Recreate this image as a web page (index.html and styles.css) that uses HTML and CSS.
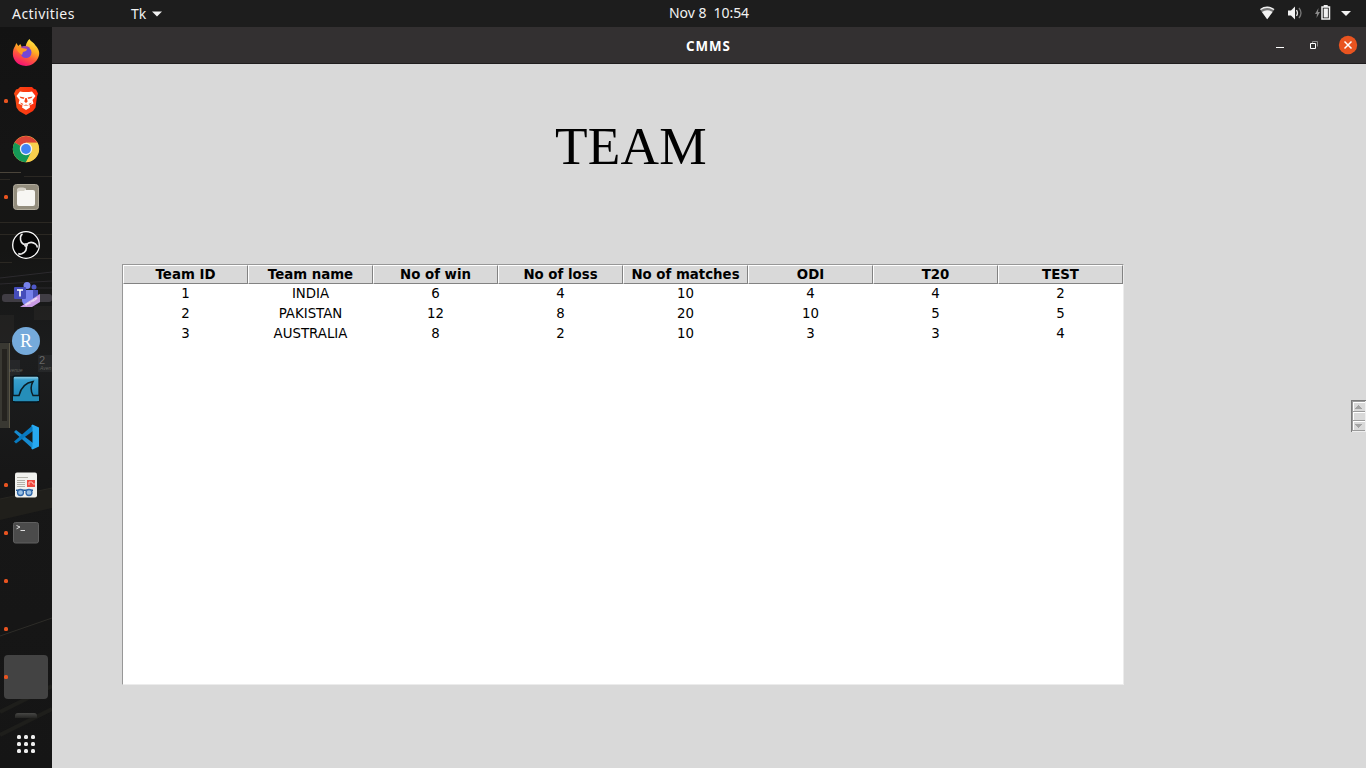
FILE: index.html
```html
<!DOCTYPE html>
<html lang="en">
<head>
<meta charset="utf-8">
<title>CMMS</title>
<link rel="stylesheet" href="styles.css">
</head>
<body>
<header class="topbar">
  <span class="activities">Activities</span>
  <span class="app-menu">Tk</span>
  <svg class="app-arrow" width="10" height="6"><path d="M0 .5h10L5 5.5z" fill="#f2f2f2"/></svg>
  <span class="clock">Nov 8&nbsp; 10:54</span>
  <svg class="tray" width="96" height="27" viewBox="0 0 96 27">
    <path d="M0 9.5Q7 4 14.500 9.500L7.200 19.300z" fill="#777"/>
    <path d="M.5 9.500Q7 5 14 9.500" fill="none" stroke="#eee" stroke-width="1.400"/>
    <path d="M2 12Q7 8.500 12.500 12L7.200 19.300z" fill="#f2f2f2"/>
    <path d="M28 10.500h3l4-4v13l-4-4h-3z" fill="#f2f2f2"/>
    <path d="M36.500 10q2 3 0 6" fill="none" stroke="#ddd" stroke-width="1.300"/>
    <path d="M39 8q4 5 0 10" fill="none" stroke="#777" stroke-width="1.300"/>
    <path d="M58.500 8l-3.500 6h2l-.5 4 3.500-6h-2z" fill="#888"/>
    <path d="M62 7h7.500v12H62z" fill="none" stroke="#f2f2f2" stroke-width="1.500"/>
    <path d="M63.700 5h4v2h-4zM63.700 8.500h4.200v9h-4.200z" fill="#f2f2f2"/>
    <path d="M81 11h10l-5 5z" fill="#f2f2f2"/>
  </svg>
</header>
<div class="desktop">
  <nav class="dock">
    <svg class="wallpaper" width="52" height="741" viewBox="0 27 52 741">
      <defs><linearGradient id="wall" x1="0" y1="0" x2="0" y2="1"><stop offset="0" stop-color="#131313"/><stop offset=".17" stop-color="#151515"/><stop offset=".3" stop-color="#151514"/><stop offset=".45" stop-color="#1c1d1e"/><stop offset=".6" stop-color="#171717"/><stop offset="1" stop-color="#151515"/></linearGradient></defs>
      <path d="M0 27h52v741H0z" fill="url(#wall)"/>
      <g stroke="#3a362d" fill="none" stroke-width="1"><path d="M0 172.500h21" stroke="#4a443a"/><path d="M0 179.500h10M24 176.500h28M0 222.500h52M0 234.500h52M0 262.500h12M28 258.500h24" opacity=".6"/><path d="M0 278l52-6M0 284l52-3M30 288h22" stroke="#2c2a2e"/></g>
      <rect x="2" y="294" width="50" height="8" rx="3" fill="#403d44"/>
      <path d="M0 315h14v27H0zM34 306v14h18v-14" fill="#34332f" opacity=".3"/>
      <path d="M0 343h10v85H0z" fill="#393832"/><path d="M2 349h5v72H2z" fill="#25231f"/><path d="M9.500 343v85" stroke="#68634f" opacity=".7"/>
      <path d="M38 355h14v17H38zM10 360h10v16H10z" fill="#303233" opacity=".5"/>
      <text x="39" y="364" class="sign">2</text><text x="40" y="370" class="sign-small">Aven</text><text x="9" y="372" class="sign-small">venue</text>
      <path d="M0 499l52-11v20L0 520z" fill="#201f1b"/><path d="M0 499l52-11" stroke="#282722"/>
      <path d="M0 636l52-18" stroke="#2d2c28"/><path d="M0 735l52-26M0 712l52-26" stroke="#1e1e1b" stroke-width="4"/>
    </svg>
    <div class="launcher">
      <svg viewBox="0 0 48 48"><defs><linearGradient id="fox" x1=".8" y1="0" x2=".35" y2="1"><stop offset="0" stop-color="#fff04b"/><stop offset=".4" stop-color="#ffad22"/><stop offset=".67" stop-color="#ff573d"/><stop offset="1" stop-color="#f50e76"/></linearGradient></defs>
      <path d="M27.500 10c1 2.500 4.500 3.500 6 6.500 4 4 5 9 2 13.500C32 36 26 38 20.500 36.500 14 35 10 29.500 11 22.500c.4-3 1.500-4.500 2.300-6l1-2.500 2 3 2-2 1.500 3 4-1c.5-3 2-5.500 3.700-7z" fill="url(#fox)"/><circle cx="24" cy="23.500" r="5.500" fill="#7546d8"/><path d="M19 18c4-2 7-1 9 1l-3 1c-2 .3-2 2-5 2z" fill="#9a42b6"/><path d="M14 17l6 2 5 1c0 2-2 2-4 3l-1 3c-3-2-6-5-6-9z" fill="#ff9823"/></svg>
    </div>
    <div class="launcher running"><svg viewBox="0 0 48 48"><defs><linearGradient id="lion"><stop stop-color="#f64b16"/><stop offset="1" stop-color="#ff2b0d"/></linearGradient></defs><path d="M18 10h12l2 2 2 .5 2 4-1 3-1.500 11-2.500 3.500-7 4-7-4-2.500-3.500L13 19.500l-1-3 2-4 2-.5z" fill="url(#lion)"/><path d="M18 14.500l3 .5h6l3-.5 3.500 4.500-3 4 1 3.500-4 2 .5 2-4 2.500-4-2.500.5-2-4-2 1-3.500-3-4z" fill="#fff"/><path d="M17.500 19.500l5 1-1 1.500-3-1zm13 0l-5 1 1 1.500 3-1zM23.300 21h1.400l1 3.500-1.700 1.500-1.700-1.500zM18 25.500l3.500 1.500-1.500 1zm12 0L26.500 27l1.500 1zM24 27.500l3 1.500-3-.5-3 .5z" fill="#f64518"/></svg></div>
    <div class="launcher"><svg viewBox="0 0 48 48"><circle cx="24" cy="24" r="13.200" fill="#f7c944"/><path d="M24 24L12.600 17.400A13.200 13.200 0 0 1 35.400 17.800H24z" fill="#db4437"/><path d="M12.600 17.400A13.200 13.200 0 0 0 24 37.200l5.300-10.200-5.300-3z" fill="#159957"/><path d="M24 17.800h11.400c4 8-1 19-11.400 19.400L29.500 27z" fill="#f8cf4d"/><circle cx="24" cy="24" r="6.200" fill="#f2f2f2"/><circle cx="24" cy="24" r="4.900" fill="#4285f4"/></svg></div>
    <div class="launcher running"><svg viewBox="0 0 48 48"><rect x="11.500" y="11.500" width="25" height="25" rx="3" fill="#938d7d" stroke="#b1ab9c"/><path d="M15 18q0-3 3-3h4q2 0 2 2h7q2 0 2 2v12q0 2-2 2H17q-2 0-2-2z" fill="#f7f6f3"/><path d="M15 20q1-2 3-2h4l2-2q-1-1.500-3-1.500h-3q-3 0-3 3z" fill="#d5d1c7"/></svg></div>
    <div class="launcher"><svg viewBox="0 0 48 48"><circle cx="24" cy="24" r="13.300" fill="#050505" stroke="#fff" stroke-width="1.300"/><g fill="none" stroke="#eee" stroke-width="1.600"><path d="M24 24c-4-1-6-4-5.500-8 .3-1.500 1-2.500 2-3"/><path d="M24 24c-4-1-6-4-5.500-8 .3-1.500 1-2.500 2-3" transform="rotate(120 24 24)"/><path d="M24 24c-4-1-6-4-5.500-8 .3-1.500 1-2.500 2-3" transform="rotate(240 24 24)"/></g><circle cx="24" cy="24" r="2" fill="#ddd"/></svg></div>
    <div class="launcher"><svg viewBox="0 0 48 48"><circle cx="25" cy="16.500" r="3.500" fill="#7782ec"/><circle cx="32" cy="18" r="2.500" fill="#5059c9"/><path d="M27 21h9v9q-1 4-5 4h-4z" fill="#4951b8"/><path d="M20 21h11v10q-1 5-6 5t-5-5z" fill="#7882ec"/><rect x="12" y="18" width="12" height="12" rx="1" fill="#454dba"/><path d="M15 21h6M18 21v6.500" stroke="#fff" stroke-width="1.600"/><path d="M18 38l20-13v8L30 38z" fill="#c99be5"/><text class="preview" transform="translate(24 37) rotate(-32)">PREVIEW</text></svg></div>
    <div class="launcher"><svg viewBox="0 0 48 48"><circle cx="24" cy="24" r="14" fill="#75aadb"/><text class="r-letter" x="24" y="29.800">R</text></svg></div>
    <div class="launcher"><svg viewBox="0 0 48 48"><defs><linearGradient id="sea" x1="0" y1="0" x2="0" y2="1"><stop stop-color="#a5d9ea"/><stop offset=".15" stop-color="#389fcd"/><stop offset="1" stop-color="#1681b5"/></linearGradient></defs><rect x="11" y="11" width="26" height="26" rx="2" fill="url(#sea)" stroke="#07151c" stroke-width="1.300"/><path d="M11 30.500h6c2-8 7-13 14-14-3 5-2 10 0 14h6V36H11z" fill="#258eb9"/><path d="M11 30.500h6c2-8 7-13 14-14-3 5-2 10 0 14h6" fill="none" stroke="#0c1d25" stroke-width="1.500"/></svg></div>
    <div class="launcher"><svg viewBox="0 0 48 48"><path d="M12 19l2-2 17 13v6z" fill="#168bd0"/><path d="M12 28.500l2 2L31 18v-6z" fill="#087ac0"/><path d="M30.500 11.500l6.500 3v19L30.500 36.500 29 35l1.500-1V14L29 13z" fill="#27a9f2"/></svg></div>
    <div class="launcher running"><svg viewBox="0 0 48 48"><rect x="13" y="11.500" width="22" height="25" rx="2" fill="#f1f1ee"/><path d="M15 16.500h11M15 19.500h8M15 21.500h8M15 23.500h8M15 25.500h8" stroke="#b3b2aa"/><path d="M25 19h8v7h-8z" fill="#ef493f"/><path d="M27 24v-3h3l1 2h2" fill="none" stroke="#ffc0b8"/><path d="M14 28.500h17v1.500H14z" fill="#245891"/><circle cx="18.500" cy="31.500" r="3" fill="#9ac1e5" stroke="#3168ab" stroke-width="1.300"/><circle cx="27" cy="31.500" r="3" fill="#9ac1e5" stroke="#3168ab" stroke-width="1.300"/></svg></div>
    <div class="launcher running"><svg viewBox="0 0 48 48"><rect x="11.500" y="13.500" width="25" height="20.500" rx="2" fill="#4b4b4b" stroke="#606060"/><path d="M14.500 16.500l3.500 1.500-3.500 1.800M18.500 21.500h4.500" fill="none" stroke="#ddd"/></svg></div>
    <div class="launcher running"></div>
    <div class="launcher running"></div>
    <div class="launcher running active"></div>
    <div class="dock-divider"></div>
    <div class="apps"><i></i><i></i><i></i><i></i><i></i><i></i><i></i><i></i><i></i></div>
  </nav>
  <main class="window">
    <div class="titlebar"><span class="window-title">CMMS</span>
      <svg class="controls" width="90" height="36" viewBox="0 0 90 36"><path d="M0 20.500h8" stroke="#fff"/><path d="M36.500 14.500h5v5M36.500 14.500v2" fill="none" stroke="#888"/><path d="M34.500 16.500h5v5h-5z" fill="#333" stroke="#fff"/><circle cx="72" cy="18" r="9.200" fill="#e95420"/><path d="M68.500 14.500l7 7m0-7l-7 7" stroke="#fff" stroke-width="1.500"/></svg>
    </div>
    <section class="content">
      <h1>TEAM</h1>
      <table class="teams">
        <thead><tr><th>Team ID</th><th>Team name</th><th>No of win</th><th>No of loss</th><th>No of matches</th><th>ODI</th><th>T20</th><th>TEST</th></tr></thead>
        <tbody>
          <tr><td>1</td><td>INDIA</td><td>6</td><td>4</td><td>10</td><td>4</td><td>4</td><td>2</td></tr>
          <tr><td>2</td><td>PAKISTAN</td><td>12</td><td>8</td><td>20</td><td>10</td><td>5</td><td>5</td></tr>
          <tr><td>3</td><td>AUSTRALIA</td><td>8</td><td>2</td><td>10</td><td>3</td><td>3</td><td>4</td></tr>
          <tr class="blank"><td colspan="8"></td></tr>
        </tbody>
      </table>
      <svg class="scrollbar" width="15" height="32" viewBox="0 0 15 32" shape-rendering="crispEdges"><path d="M0 0h15v32H0z" fill="#7b7b7b"/><path d="M1 1h14v31H1z" fill="#9b9b9b"/><path d="M2 2h12v9H2zM2 12h12v8H2zM2 21h12v9H2z" fill="#fff"/><path d="M3 3h11v8H3zM3 13h11v7H3zM3 22h11v8H3z" fill="#d9d9d9"/><path d="M7 5h1v1h1v1h1v1h1v1H4V8h1V7h1V6h1zM4 24h7v1h-1v1H9v1H8v1H7v-1H6v-1H5v-1H4z" fill="#a3a3a3"/><path d="M14 1h1v31h-1zM1 31h14v1H1z" fill="#eee"/></svg>
    </section>
  </main>
</div>
</body>
</html>
```
FILE: styles.css
```css
* { box-sizing: border-box; }
body { margin: 0; width: 1366px; height: 768px; overflow: hidden; background: #d9d9d9; font-family: "Noto Sans", sans-serif; }
svg { display: block; }
.topbar { height: 27px; display: flex; align-items: center; background: #1d1d1d; color: #f2f2f2; font-size: 14px; line-height: 27px; white-space: nowrap; }
.activities { width: 119px; padding-left: 12px; letter-spacing: .45px; }
.app-menu { width: 33px; padding-left: 12px; }
.app-arrow { flex: none; }
.clock { width: 100px; margin-left: 507px; padding-bottom: 1px; line-height: 26px; letter-spacing: -.05px; }
.tray { margin-left: 491px; flex: none; }
.desktop { display: flex; height: 741px; }
.dock { position: relative; width: 52px; padding: 2px 2px 0; display: flex; flex-direction: column; flex: none; }
.wallpaper { position: absolute; left: 0; top: 0; z-index: -1; }
.sign { font: 11px "Liberation Sans", sans-serif; fill: #666; }
.sign-small { font: italic 5px "Liberation Sans", sans-serif; fill: #60605c; }
.launcher { position: relative; width: 48px; height: 48px; flex: none; }
.launcher svg { width: 48px; height: 48px; }
.running::after { content: ""; position: absolute; left: 2px; top: 22px; width: 4px; height: 4px; border-radius: 1.5px; background: #e95420; }
.active::before { content: ""; position: absolute; left: 2px; top: 2px; width: 44px; height: 44px; border-radius: 4px; background: #434343; }
.preview { font: bold 3px "Liberation Sans", sans-serif; fill: #fff; }
.r-letter { font: 18px "Liberation Serif", serif; fill: #fff; text-anchor: middle; }
.dock-divider { width: 22px; height: 5px; margin: 12px 0 0 13px; border-radius: 3px 3px 0 0; background: linear-gradient(#474745, #252523); flex: none; }
.apps { display: grid; grid-template-columns: repeat(3, 4px); grid-auto-rows: 4px; gap: 3px; margin: 17px 0 0 15px; }
.apps i { background: #eee; border-radius: 1.5px; }
.window { flex: 1; display: flex; flex-direction: column; }
.titlebar { height: 37px; display: flex; align-items: center; background: #333031; border-bottom: 1px solid #1f1d1e; color: #fff; }
.window-title { width: 60px; margin-left: 634px; padding-top: 1px; font: bold 13.3px/36px "Noto Sans", sans-serif; letter-spacing: .95px; }
.controls { margin-left: 530px; flex: none; }
.content { flex: 1; display: grid; grid-template-columns: 70px 1002px 1fr; grid-template-rows: 200px 421px 1fr; background: #d9d9d9; }
h1 { grid-column: 2; margin: 0; padding: 52px 0 0 433px; color: #000; font: 53.33px/60px "Liberation Serif", serif; letter-spacing: .2px; }
.teams { grid-column: 2; grid-row: 2; width: 1002px; height: 421px; table-layout: fixed; border-collapse: separate; border-spacing: 0; background: #fff; border: 1px solid; border-color: #979797 #ececec #ececec #979797; color: #000; font: 13.333px/16px "DejaVu Sans", sans-serif; text-align: center; }
.teams th { height: 19px; padding: 1px 0 0; line-height: 16px; background: #d9d9d9; border: 1px solid; border-color: #fff #828282 #828282 #fff; }
.teams td { height: 20px; padding: 1px 0 1px 0; vertical-align: middle; line-height: 18px; }
.teams .blank td { height: auto; padding: 0; }
.scrollbar { grid-column: 3; grid-row: 2; justify-self: end; margin-top: 136px; }
```
